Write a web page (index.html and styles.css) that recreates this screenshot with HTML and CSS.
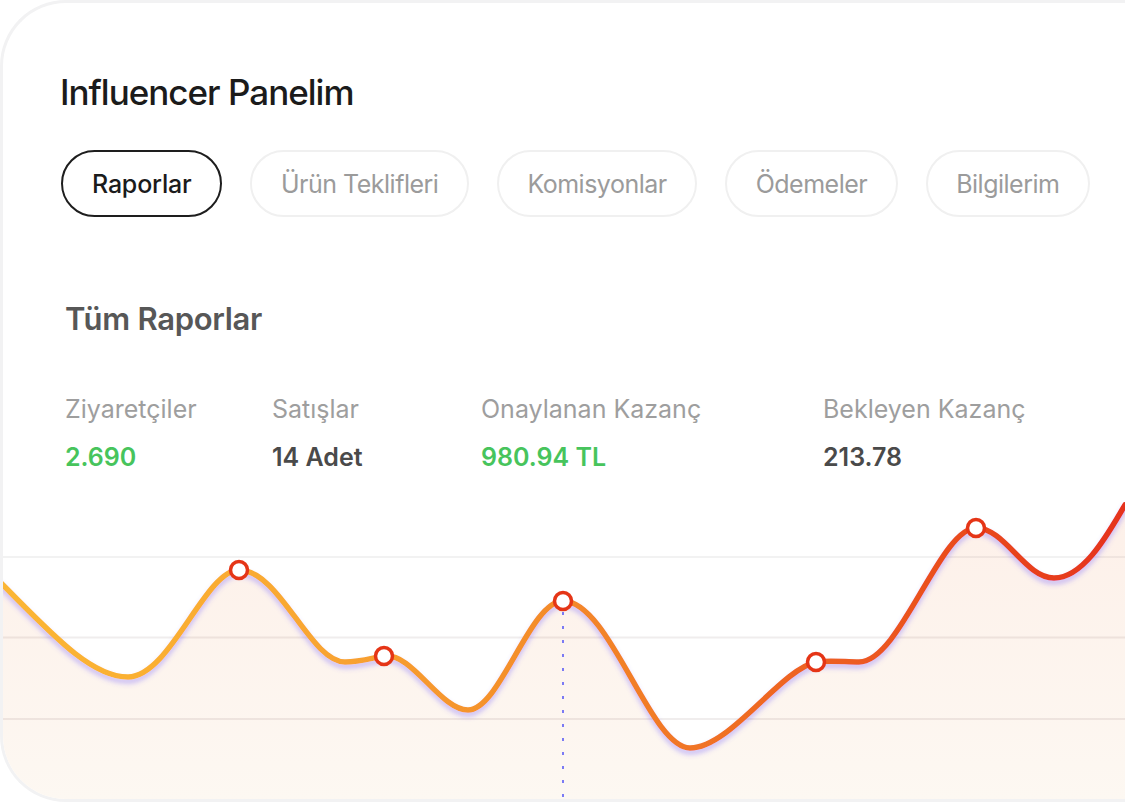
FILE: index.html
```html
<!DOCTYPE html>
<html lang="tr">
<head>
    <meta charset="UTF-8">
    <meta name="viewport" content="width=device-width, initial-scale=1.0">
    <title>Influencer Panelim</title>
    <link rel="stylesheet" href="styles.css">
</head>
<body>

    <div class="panel">
        <h1 class="panel-title">Influencer Panelim</h1>

        <!-- Sekmeler -->
        <div class="tabs">
            <a class="tab active" href="#">Raporlar</a>
            <a class="tab" href="#">Ürün Teklifleri</a>
            <a class="tab" href="#">Komisyonlar</a>
            <a class="tab" href="#">Ödemeler</a>
            <a class="tab" href="#">Bilgilerim</a>
        </div>

        <h2 class="section-title">Tüm Raporlar</h2>

        <div class="stats">
            <div class="stat">
                <div class="stat-label">Ziyaretçiler</div>
                <div class="stat-value green">2.690</div>
            </div>
            <div class="stat">
                <div class="stat-label">Satışlar</div>
                <div class="stat-value">14 Adet</div>
            </div>
            <div class="stat">
                <div class="stat-label">Onaylanan Kazanç</div>
                <div class="stat-value green">980.94 TL</div>
            </div>
            <div class="stat">
                <div class="stat-label">Bekleyen Kazanç</div>
                <div class="stat-value">213.78</div>
            </div>
        </div>

        <!-- Grafik -->
        <svg class="chart" viewBox="3 500 1122 299" width="1122" height="299">
            <defs>
                <linearGradient id="lineGrad" gradientUnits="userSpaceOnUse" x1="0" y1="0" x2="1125" y2="0">
                    <stop offset="0" stop-color="#fbb634"/>
                    <stop offset="0.25" stop-color="#f9a932"/>
                    <stop offset="0.5" stop-color="#f38a2a"/>
                    <stop offset="0.7" stop-color="#ee6522"/>
                    <stop offset="1" stop-color="#e5331a"/>
                </linearGradient>
                <linearGradient id="areaGrad" x1="0" y1="0" x2="0" y2="1">
                    <stop offset="0" stop-color="#fdf0e9"/>
                    <stop offset="1" stop-color="#fdf8f2"/>
                </linearGradient>
                <filter id="lineShadow" x="-5%" y="-20%" width="110%" height="140%">
                    <feDropShadow dx="0" dy="4" stdDeviation="2.5" flood-color="#6a55ff" flood-opacity="0.35"/>
                </filter>
            </defs>

            <path class="area" fill="url(#areaGrad)" d="M0,582 C50,632 90,677 128,677 C170,677 205,570 239,570 C280,570 310,662 345,662 C360,662 372,658 384,656 C412,652 440,710 468,710 C500,710 530,601 563,601 C610,601 650,748 690,748 C730,748 780,670 816,662 C830,660 845,662 859,662 C900,662 940,528 976,528 C1005,528 1025,578 1054,578 C1085,578 1110,530 1125,505 L1125,800 L0,800 Z"/>

            <line class="grid soft" x1="0" y1="557" x2="1125" y2="557"/>
            <line class="grid" x1="0" y1="637.5" x2="1125" y2="637.5"/>
            <line class="grid" x1="0" y1="719" x2="1125" y2="719"/>

            <line class="guide" x1="563" y1="612" x2="563" y2="800"/>

            <path class="line" stroke="url(#lineGrad)" filter="url(#lineShadow)" d="M0,582 C50,632 90,677 128,677 C170,677 205,570 239,570 C280,570 310,662 345,662 C360,662 372,658 384,656 C412,652 440,710 468,710 C500,710 530,601 563,601 C610,601 650,748 690,748 C730,748 780,670 816,662 C830,660 845,662 859,662 C900,662 940,528 976,528 C1005,528 1025,578 1054,578 C1085,578 1110,530 1125,505"/>

            <circle class="dot" cx="239" cy="570" r="8.5"/>
            <circle class="dot" cx="384" cy="656" r="8.5"/>
            <circle class="dot" cx="563" cy="601" r="8.5"/>
            <circle class="dot" cx="816" cy="662" r="8.5"/>
            <circle class="dot" cx="976" cy="528" r="8.5"/>
        </svg>
    </div>

</body>
</html>
```

FILE: styles.css
```css
body {
    margin: 0;
    background: #ffffff;
    font-family: 'Inter', 'Liberation Sans', Arial, sans-serif;
    overflow: hidden;
}

.panel {
    box-sizing: border-box;
    height: 802px;
    border: 3px solid #f2f2f3;
    border-right: none;
    border-radius: 66px 0 0 66px;
    overflow: hidden;
    display: flex;
    flex-direction: column;
    background: #ffffff;
}

.panel-title {
    margin: 68px 0 0 57px;
    font-size: 35px;
    line-height: 42px;
    font-weight: 500;
    letter-spacing: -1px;
    color: #1b1b1b;
}

.tabs {
    display: flex;
    gap: 28px;
    margin: 37px 0 0 58px;
}

.tab {
    box-sizing: border-box;
    height: 67px;
    display: flex;
    align-items: center;
    padding: 0 28.5px;
    border: 2px solid #f0f0f0;
    border-radius: 34px;
    font-size: 25px;
    letter-spacing: -0.5px;
    color: #9b9b9b;
    text-decoration: none;
    white-space: nowrap;
}

.tab.active {
    padding: 0 29px;
    border-color: #1e1e1e;
    color: #1b1b1b;
    font-weight: 500;
    letter-spacing: -0.2px;
}

.section-title {
    margin: 84px 0 0 62px;
    font-size: 31px;
    line-height: 36px;
    font-weight: 600;
    letter-spacing: -0.3px;
    color: #575757;
}

.stats {
    display: grid;
    grid-template-columns: 207px 209px 342px auto;
    margin: 57px 0 0 62px;
}

.stat-label {
    font-size: 25px;
    line-height: 30px;
    color: #9e9e9e;
}

.stat-value {
    margin-top: 18px;
    font-size: 25px;
    line-height: 30px;
    font-weight: 600;
    color: #4a4a4a;
}

.stat-value.green { color: #47c45c; }

.chart {
    display: block;
    margin-top: auto;
    flex-shrink: 0;
}

.chart .grid {
    stroke: rgba(60, 30, 20, 0.08);
    stroke-width: 2;
}

.chart .grid.soft { stroke: rgba(0, 0, 0, 0.05); }

.chart .guide {
    stroke: #5b5cf5;
    stroke-width: 1.6;
    stroke-dasharray: 3 11;
}

.chart .line {
    fill: none;
    stroke-width: 5.5;
    stroke-linecap: round;
}

.chart .dot {
    fill: #ffffff;
    stroke: #e53516;
    stroke-width: 3.5;
}
```
